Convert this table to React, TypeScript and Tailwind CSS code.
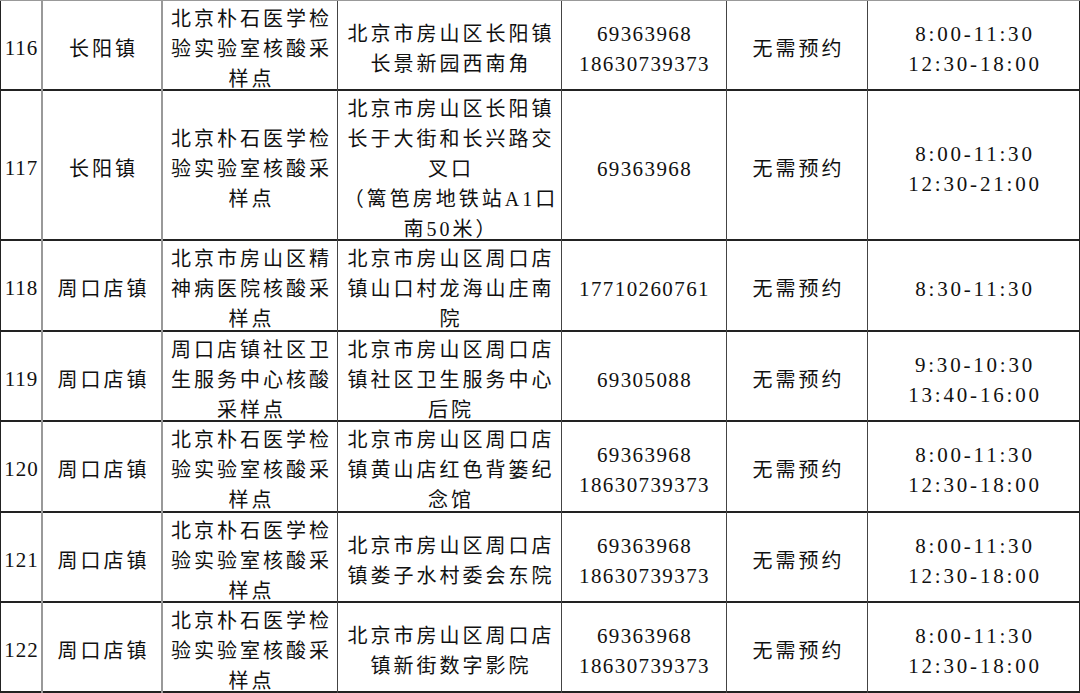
const rows = [
  {
    no: "116",
    town: "长阳镇",
    name: ["北京朴石医学检", "验实验室核酸采", "样点"],
    addr: ["北京市房山区长阳镇", "长景新园西南角"],
    phone: ["69363968", "18630739373"],
    time: ["8:00-11:30", "12:30-18:00"],
    h: "h-[90px]",
  },
  {
    no: "117",
    town: "长阳镇",
    name: ["北京朴石医学检", "验实验室核酸采", "样点"],
    addr: ["北京市房山区长阳镇", "长于大街和长兴路交", "叉口", "（篱笆房地铁站A1口", "南50米）"],
    phone: ["69363968"],
    time: ["8:00-11:30", "12:30-21:00"],
    h: "h-[150px]",
  },
  {
    no: "118",
    town: "周口店镇",
    name: ["北京市房山区精", "神病医院核酸采", "样点"],
    addr: ["北京市房山区周口店", "镇山口村龙海山庄南", "院"],
    phone: ["17710260761"],
    time: ["8:30-11:30"],
    h: "h-[91px]",
  },
  {
    no: "119",
    town: "周口店镇",
    name: ["周口店镇社区卫", "生服务中心核酸", "采样点"],
    addr: ["北京市房山区周口店", "镇社区卫生服务中心", "后院"],
    phone: ["69305088"],
    time: ["9:30-10:30", "13:40-16:00"],
    h: "h-[90px]",
  },
  {
    no: "120",
    town: "周口店镇",
    name: ["北京朴石医学检", "验实验室核酸采", "样点"],
    addr: ["北京市房山区周口店", "镇黄山店红色背篓纪", "念馆"],
    phone: ["69363968", "18630739373"],
    time: ["8:00-11:30", "12:30-18:00"],
    h: "h-[91px]",
  },
  {
    no: "121",
    town: "周口店镇",
    name: ["北京朴石医学检", "验实验室核酸采", "样点"],
    addr: ["北京市房山区周口店", "镇娄子水村委会东院"],
    phone: ["69363968", "18630739373"],
    time: ["8:00-11:30", "12:30-18:00"],
    h: "h-[90px]",
  },
  {
    no: "122",
    town: "周口店镇",
    name: ["北京朴石医学检", "验实验室核酸采", "样点"],
    addr: ["北京市房山区周口店", "镇新街数字影院"],
    phone: ["69363968", "18630739373"],
    time: ["8:00-11:30", "12:30-18:00"],
    h: "h-[90px]",
  },
];

function Lines({ lines, kind }: { lines: string[]; kind: "cjk" | "phone" | "time" }) {
  const style =
    kind === "cjk"
      ? "text-[20px] tracking-[3px] pl-[3px]"
      : kind === "phone"
      ? "text-[21px] tracking-[1.4px] pl-[1px]"
      : "text-[21px] tracking-[2.8px] pl-[3px]";
  return (
    <div className={style}>
      {lines.map((l, i) => (
        <div key={i} className="leading-[30px] whitespace-nowrap">
          {l}
        </div>
      ))}
    </div>
  );
}

export default function App() {
  const cell = "flex items-center justify-center text-center pt-[3px] border-r border-[#444]";
  return (
    <div
      className="w-[1080px] h-[693px] overflow-hidden bg-white text-[#111] border-t border-[#999]"
      style={{ fontFamily: '"Liberation Serif", "Noto Sans CJK SC", serif' }}
    >
      {rows.map((r) => (
        <div
          key={r.no}
          className={`grid grid-cols-[43px_120px_175px_224px_165px_141px_212px] border-b-2 border-[#222] ${r.h}`}
        >
          <div className={`${cell} border-l border-l-[#222] border-r-2 border-r-[#999]`}>
            <span className="text-[21px] tracking-[1px] pl-[1px]">{r.no}</span>
          </div>
          <div className={`${cell} border-r-2 border-r-[#999]`}>
            <span className="text-[20px] tracking-[3px] pl-[3px]">{r.town}</span>
          </div>
          <div className={cell}>
            <Lines lines={r.name} kind="cjk" />
          </div>
          <div className={cell}>
            <Lines lines={r.addr} kind="cjk" />
          </div>
          <div className={cell}>
            <Lines lines={r.phone} kind="phone" />
          </div>
          <div className={cell}>
            <span className="text-[20px] tracking-[3px] pl-[3px]">无需预约</span>
          </div>
          <div className={`${cell} border-r-[#222]`}>
            <Lines lines={r.time} kind="time" />
          </div>
        </div>
      ))}
    </div>
  );
}
